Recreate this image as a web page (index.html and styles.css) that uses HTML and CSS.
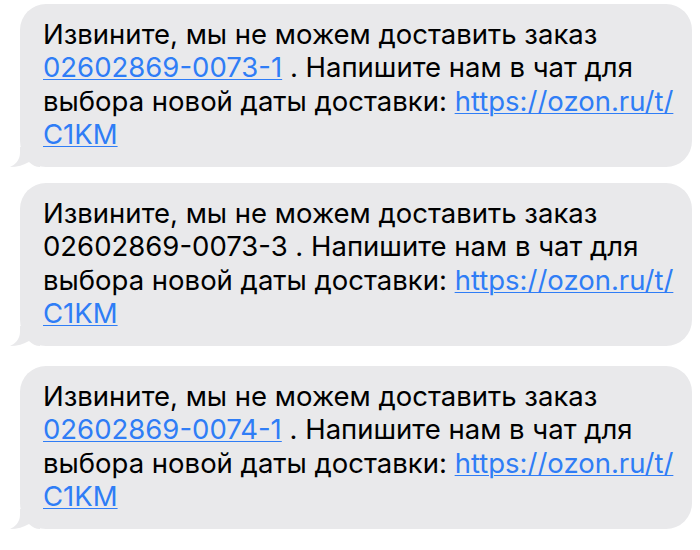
FILE: index.html
```html
<!DOCTYPE html>
<html lang="ru">
<head>
<meta charset="utf-8">
<link rel="stylesheet" href="styles.css">
</head>
<body>
<div class="thread">
  <div class="bubble">
    <p class="text">Извините, мы не можем доставить заказ<br><a class="link" href="#">02602869-0073-1</a> . Напишите нам в чат для<br>выбора новой даты доставки: <a class="link" href="#">https://ozon.ru/t/<br>C1KM</a></p>
    <svg class="tail" viewBox="0 0 30 20" width="30" height="20"><path d="M10 0 L10 6 C10 13 5 18 0 20 C7 20 14 18 19 15 C22 18 26 20 30 20 L30 0 Z"/></svg>
  </div>
  <div class="bubble">
    <p class="text">Извините, мы не можем доставить заказ<br>02602869-0073-3 . Напишите нам в чат для<br>выбора новой даты доставки: <a class="link" href="#">https://ozon.ru/t/<br>C1KM</a></p>
    <svg class="tail" viewBox="0 0 30 20" width="30" height="20"><path d="M10 0 L10 6 C10 13 5 18 0 20 C7 20 14 18 19 15 C22 18 26 20 30 20 L30 0 Z"/></svg>
  </div>
  <div class="bubble bubble-last">
    <p class="text">Извините, мы не можем доставить заказ<br><a class="link" href="#">02602869-0074-1</a> . Напишите нам в чат для<br>выбора новой даты доставки: <a class="link" href="#">https://ozon.ru/t/<br>C1KM</a></p>
    <svg class="tail" viewBox="0 0 30 20" width="30" height="20"><path d="M10 0 L10 6 C10 13 5 18 0 20 C7 20 14 18 19 15 C22 18 26 20 30 20 L30 0 Z"/></svg>
  </div>
</div>
</body>
</html>
```
FILE: styles.css
```css
html, body {
  margin: 0;
  padding: 0;
  background: #ffffff;
}
.thread {
  display: flex;
  flex-direction: column;
  gap: 16px;
  padding: 4px 8px 0 20px;
}
.bubble {
  position: relative;
  background: #e9e9eb;
  border-radius: 26px;
  padding: 14px 16px 14px 23px;
  height: 163px;
  box-sizing: border-box;
}
.bubble-last {
  margin-top: 4px;
}
.text {
  margin: 0;
  font-family: Inter, "Liberation Sans", sans-serif;
  font-size: 27.5px;
  line-height: 33.4px;
  color: #000000;
  white-space: nowrap;
}
.link {
  color: #2f7df6;
  text-decoration: underline;
  text-decoration-thickness: 1px;
  text-underline-offset: 2px;
}
.tail {
  position: absolute;
  left: -10px;
  bottom: 0;
  fill: #e9e9eb;
}
```
